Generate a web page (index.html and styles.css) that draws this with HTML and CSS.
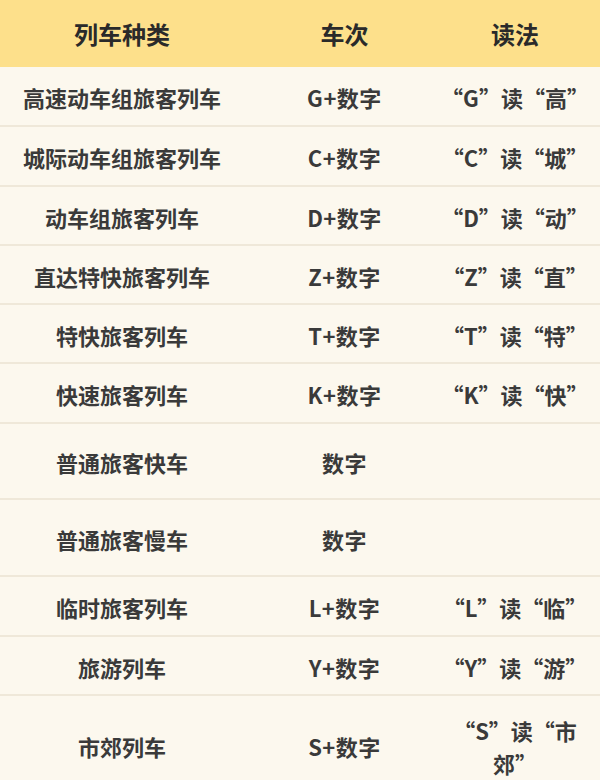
FILE: index.html
```html
<!DOCTYPE html>
<html lang="zh-CN">
<head>
<meta charset="utf-8">
<title>列车种类</title>
<link rel="stylesheet" href="styles.css">
</head>
<body>
<div class="table">
  <div class="row head">
    <div class="cell c1">列车种类</div>
    <div class="cell c2">车次</div>
    <div class="cell c3">读法</div>
  </div>
  <div class="row r60">
    <div class="cell c1">高速动车组旅客列车</div>
    <div class="cell c2">G+数字</div>
    <div class="cell c3">“G”读“高”</div>
  </div>
  <div class="row r60">
    <div class="cell c1">城际动车组旅客列车</div>
    <div class="cell c2">C+数字</div>
    <div class="cell c3">“C”读“城”</div>
  </div>
  <div class="row r59">
    <div class="cell c1">动车组旅客列车</div>
    <div class="cell c2">D+数字</div>
    <div class="cell c3">“D”读“动”</div>
  </div>
  <div class="row r59">
    <div class="cell c1">直达特快旅客列车</div>
    <div class="cell c2">Z+数字</div>
    <div class="cell c3">“Z”读“直”</div>
  </div>
  <div class="row r59">
    <div class="cell c1">特快旅客列车</div>
    <div class="cell c2">T+数字</div>
    <div class="cell c3">“T”读“特”</div>
  </div>
  <div class="row r60">
    <div class="cell c1">快速旅客列车</div>
    <div class="cell c2">K+数字</div>
    <div class="cell c3">“K”读“快”</div>
  </div>
  <div class="row r76">
    <div class="cell c1">普通旅客快车</div>
    <div class="cell c2">数字</div>
    <div class="cell c3"></div>
  </div>
  <div class="row r77">
    <div class="cell c1">普通旅客慢车</div>
    <div class="cell c2">数字</div>
    <div class="cell c3"></div>
  </div>
  <div class="row r60">
    <div class="cell c1">临时旅客列车</div>
    <div class="cell c2">L+数字</div>
    <div class="cell c3">“L”读“临”</div>
  </div>
  <div class="row r59">
    <div class="cell c1">旅游列车</div>
    <div class="cell c2">Y+数字</div>
    <div class="cell c3">“Y”读“游”</div>
  </div>
  <div class="row r100">
    <div class="cell c1">市郊列车</div>
    <div class="cell c2">S+数字</div>
    <div class="cell c3">“S”读“市郊”</div>
  </div>
</div>
</body>
</html>
```
FILE: styles.css
```css
html, body {
  margin: 0;
  padding: 0;
  background: #fcf8ee;
  overflow: hidden;
}
body {
  width: 600px;
  height: 780px;
  font-family: "Noto Sans CJK SC", "Noto Sans", sans-serif;
  font-weight: 700;
  color: #3a3a3a;
}
.table {
  display: flex;
  flex-direction: column;
}
.row {
  display: grid;
  grid-template-columns: 244px 196px 160px;
  box-sizing: border-box;
  border-bottom: 2px solid #efe8d9;
  background: #fcf8ee;
}
.head {
  height: 67px;
  background: #fde08b;
  border-bottom: none;
  font-size: 24px;
  color: #2a2a2a;
}
.cell {
  display: flex;
  align-items: center;
  justify-content: center;
  text-align: center;
  font-size: inherit;
}
.row:not(.head) {
  font-size: 22px;
  line-height: 33px;
}
.row:not(.head) .cell {
  padding-top: 3px;
}
.row:not(.head) .c2 {
  letter-spacing: 0.5px;
}
.c2 {
  padding-left: 5px;
}
.c3 {
  padding-right: 10px;
}
.r59 { height: 59px; }
.r60 { height: 60px; }
.r76 { height: 76px; }
.r77 { height: 77px; }
.r100 { height: 100px; }
```
